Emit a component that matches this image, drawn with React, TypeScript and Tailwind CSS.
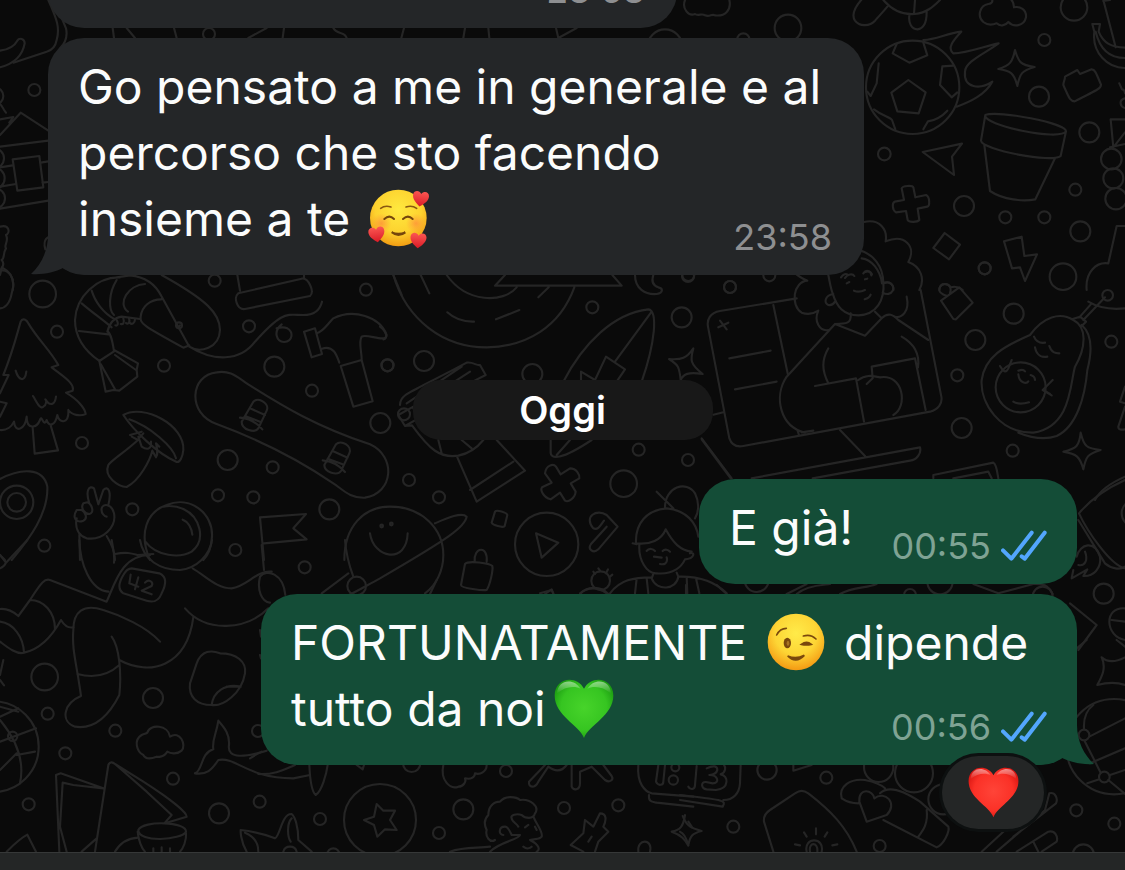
import type { ReactNode } from 'react';

type Tile = { x: number; y: number; dots: number[][]; lines: string[] };

/* Wallpaper doodles. Every tile is drawn at three times its final size. */
const tiles: Tile[] = [
  {
    x: 0,
    y: 0,
    dots: [[103, 270, 18], [627, 102, 18], [-15, 288, 25], [-18, 475, 30], [-18, 535, 32], [-15, 595, 30]],
    lines: [
      'M145 0C172 60 180 85 170 120C166 142 155 151 140 155L40 188',
      'M163 0L198 85C204 112 195 130 180 145',
      'M0 152C30 148 45 135 52 122C58 112 74 116 74 130C68 165 45 190 0 202',
      'M0 312C8 318 10 330 18 338',
      'M0 405L62 338L145 392M0 358L40 351L28 368',
      'M0 440L145 422M0 502L38 496M0 560L48 552M122 488L145 484M128 548L145 546M0 626L145 602',
      'M38 478L118 468L130 562L52 572Z',
      'M0 680C30 672 30 700 18 705C28 725 10 735 18 745C8 760 15 775 5 780C15 790 10 800 0 812C30 805 45 840 38 870',
      'M338 84L342 114M380 84L405 114M522 84L530 114M800 84L745 114M852 84L848 114M1000 84C1010 104 1035 94 1040 114M1212 84L1204 114',
      'M145 712C132 718 132 735 136 748',
    ],
  },
  {
    x: 450,
    y: 0,
    dots: [[1014, 84, 40], [645, 140, 52], [880, 118, 18]],
    lines: [
      'M705 0C695 25 715 50 735 42C745 50 755 38 765 46C780 52 785 40 795 46C825 50 845 30 838 0',
      'M45 84L40 114M115 84L118 114M318 84L325 114L380 84',
    ],
  },
  {
    x: 800,
    y: 0,
    dots: [
      [822, 22, 40], [733, 120, 18], [717, 290, 30], [868, 397, 30], [253, 462, 19], [826, 569, 18],
      [492, 618, 30], [616, 652, 18], [733, 652, 18], [841, 694, 30], [554, 805, 18], [789, 830, 40],
      [934, 477, 31], [940, 535, 30], [948, 596, 32], [338, 262, 140],
    ],
    lines: [
      'M188 -5C165 20 152 42 165 62C180 82 210 78 225 62C240 45 250 35 262 20M250 0C280 35 310 45 345 42C380 38 400 20 420 0M345 0L342 42M328 46C325 70 335 88 352 88C372 86 380 65 380 36',
      'M575 -5C580 5 575 12 565 12C540 16 530 48 550 66C565 78 580 74 590 70C600 80 615 78 625 66C640 82 672 80 678 52C680 28 660 18 642 22C642 5 636 0 630 -5',
      'M290 132L278 160L328 188L382 166L370 128M325 240L377 277L356 340L292 334L274 278Z',
      'M460 197L427 199L420 255L455 292L472 277M236 190L230 250L212 288L202 275M222 328C250 350 270 350 276 360L286 388M370 388L384 364C410 360 430 345 442 332',
      'M370 120C410 118 440 100 484 95C460 120 440 145 460 160C500 160 555 138 596 130C555 160 495 185 495 215C490 265 540 270 577 245C555 285 510 305 470 320',
      'M645 150C655 185 660 195 704 201C665 212 660 220 652 258C643 220 632 212 595 207C630 197 638 185 645 150Z',
      'M795 230L832 210L840 222L875 208C884 208 887 215 903 254C903 264 900 266 824 304C810 304 808 295 790 255C790 245 795 240 795 230Z',
      'M877 72L900 72L896 95C910 130 935 142 975 143M877 72L883 95C875 160 925 205 975 204M887 95C900 150 930 174 975 174M910 0L947 142M910 3L930 0',
      'M556 345C595 330 800 370 798 394C780 425 545 375 556 345ZM556 345L543 422C545 450 760 490 782 468L798 394M553 435L570 573C610 600 670 605 706 598L765 475',
      'M368 456L486 431L456 470L462 525Z',
      'M305 565C308 557 337 555 340 562L346 592L378 585C390 590 390 618 382 620L353 626L358 660C352 667 327 668 323 660L318 633L288 637C276 630 276 608 284 605L312 600Z',
      'M434 699L480 734L447 778L400 744Z',
      'M612 724L665 710L673 768L711 763L675 843L660 802L636 805Z',
      'M975 358L932 358L940 442L975 397M930 442L975 432',
      'M958 250L966 268C975 270 975 275 975 280M975 295C955 300 960 320 975 324',
      'M975 678L950 678L925 790C890 785 855 815 860 870',
      'M192 666C240 655 263 690 257 724C315 700 350 740 325 786C365 800 375 840 358 870',
      'M175 750C220 760 250 800 250 850C270 840 282 855 280 870M185 775C215 778 240 810 246 850M190 820C198 808 212 812 214 826M135 834C142 822 158 820 163 828',
      'M418 870C420 845 445 850 452 862C465 858 480 862 488 870',
    ],
  },
  {
    x: 0,
    y: 260,
    dots: [
      [128, 102, 40], [171, 215, 18], [644, 62, 18], [747, 199, 18], [1098, 89, 18], [492, 317, 18],
      [823, 320, 30], [936, 392, 18], [1163, 316, 18], [1141, 489, 30], [246, 549, 18], [683, 600, 30],
      [818, 622, 18], [654, 706, 18], [760, 712, 18], [397, 748, 18], [988, 748, 30], [706, 870, 18],
      [133, 857, 18], [50, 727, 50], [50, 727, 28], [1212, 463, 18], [1145, 798, 4], [1174, 792, 4],
      [537, 196, 9],
    ],
    lines: [
      'M0 45L6 22C40 40 45 70 35 100C30 130 15 145 0 145M1180 45L1205 105',
      'M360 52C290 50 228 110 225 180C225 240 265 280 298 303L342 274C335 225 325 215 322 215C330 185 345 172 365 170L420 177M245 130C280 160 310 180 335 202M275 92C285 125 310 160 345 178M350 60C325 100 325 150 342 165M350 52L390 46C430 50 465 70 484 108L565 255M237 213L325 223M384 155C350 130 385 75 435 72M484 118C450 118 425 140 422 170C420 190 425 195 550 263L568 256M540 196L535 202',
      'M350 180C358 195 350 198 346 196M370 175C375 190 368 194 362 192M387 175C392 190 382 193 378 189M405 178C405 190 395 195 390 189',
      'M485 45C620 120 660 160 660 210C658 265 600 280 568 260C640 305 720 305 765 245C850 150 860 165 910 165C945 165 960 150 966 125M845 193C818 215 830 245 852 246C880 243 880 215 862 205C850 200 840 202 830 205',
      'M298 303L317 395L340 390L358 392L412 350L410 330L414 310L342 270M302 312L345 388M345 285L408 330',
      'M712 45L720 92M715 100L905 56C925 52 945 95 930 108L735 147C710 150 700 110 715 100M912 45L912 56',
      'M945 205L912 215L935 292L966 282ZM950 220C970 215 980 195 1000 175C1060 145 1140 170 1160 225C1160 250 1100 220 1085 230C1075 245 1085 275 1085 298M966 266C1000 255 1010 285 1018 308M1022 318L1085 300L1118 424L1060 440Z',
      'M10 345C40 270 50 225 62 185C68 172 80 180 85 190C115 240 150 270 175 315L155 322C190 350 225 370 218 392L198 398C235 420 255 445 257 462C240 470 215 465 205 450C208 495 175 490 172 465C165 500 145 500 140 480C130 505 125 460 120 480C110 505 80 510 80 470C75 510 45 520 42 485C35 500 20 512 0 510M10 345L26 345L0 400M0 425L20 430L0 470M47 332C55 360 75 370 79 335M99 408C110 425 120 450 130 440C140 435 140 420 136 418C150 440 165 435 168 410M98 503L104 581L174 571L152 496',
      'M370 465C430 430 555 495 550 570C548 590 540 608 530 606C470 580 400 510 370 465ZM388 478C450 500 520 560 528 595M390 525L425 515M395 530L414 540C370 580 335 600 325 615C310 650 355 680 380 681C420 660 450 600 457 572M415 530L425 560C440 570 455 570 453 545M457 572L468 592C475 580 472 570 468 550L478 560M430 520L408 545',
      'M650 492C560 460 570 345 650 337C690 330 710 350 740 370C850 440 950 500 1110 553C1190 590 1180 700 1095 713C1050 715 1030 690 1000 670C890 595 780 540 650 492Z',
      'M725 485L760 425C775 410 810 430 800 452L775 505C765 520 725 510 725 485ZM720 473C745 475 770 488 787 508M735 468L780 485M750 445L795 465',
      'M973 615L1008 553C1023 538 1058 558 1048 580L1023 633C1013 648 973 638 973 615ZM968 601C993 603 1018 616 1035 636M983 596L1028 613M998 573L1043 593',
      'M0 657C60 625 130 620 142 680C145 760 90 835 35 900M0 885L15 900',
      'M230 775C225 800 232 825 260 835C310 842 350 800 342 760C335 730 308 730 305 745C302 760 315 770 320 770M268 730C255 690 268 675 282 685L295 733L310 690C325 675 335 695 325 735M230 750C215 775 230 790 250 782C265 775 255 755 245 750ZM250 730C240 745 255 762 268 762C285 758 275 732 262 727ZM238 825L240 900M320 828C340 860 345 880 345 900M345 882C380 875 395 880 412 885L460 882',
      'M450 900C415 820 440 755 500 735C570 705 640 760 636 830C634 870 620 890 610 900M436 845C470 890 540 895 575 875C620 840 600 770 550 747C530 738 510 736 490 740M548 779C565 785 575 805 577 824',
      'M792 900L780 772L918 762L880 805L920 838L792 850',
    ],
  },
  {
    x: 380,
    y: 260,
    dots: [
      [22, 316, 18], [132, 303, 30], [457, 342, 30], [637, 142, 18], [925, 45, 18],
      [1050, 81, 18], [905, 172, 30], [776, 569, 18], [924, 600, 18], [731, 671, 40], [87, 660, 18],
      [177, 712, 18], [500, 853, 95], [662, 962, 28],
    ],
    lines: [
      'M40 45C80 180 190 262 320 262C440 260 540 200 583 82M200 45C260 130 370 130 410 82M122 45L148 100M202 157C225 178 250 186 282 185M348 178L418 150M475 112L506 82M375 45L345 77L725 77L697 45',
      'M765 45C765 85 795 105 830 102C850 98 850 85 835 82C815 75 815 60 820 45',
      'M550 365C610 250 700 160 805 148C835 150 825 250 785 365M815 155L705 305M603 360L603 335L645 360M645 360L678 290L735 328L710 365M512 540L512 575C510 600 545 600 635 540M530 585L570 540',
      'M60 435C60 400 90 400 260 308C280 305 290 318 300 315L317 345L278 365M80 430L245 320M100 445L270 335M55 465L75 498L110 478M55 465L100 440M75 498L96 496C150 570 180 595 235 587C270 580 290 565 310 540M175 540L185 580M245 540L275 565M232 592L290 725L435 632L350 540M270 690L400 605',
      'M940 265C930 300 930 312 968 342C925 335 910 342 902 360C898 320 895 315 867 297C905 300 920 295 940 265Z',
      'M495 640C498 615 520 610 528 620L542 643L570 625C590 625 600 645 598 655L572 670L587 695C585 715 565 728 555 722L540 698L512 718C490 712 480 690 486 682L515 668Z',
      'M345 755C350 748 380 758 382 765L374 798C368 805 338 795 335 788Z',
      'M255 912L243 975C243 985 310 992 320 990C330 975 340 930 337 918C330 910 265 900 255 912ZM284 905C280 860 325 855 320 905',
      'M468 820L535 848L485 893Z',
      'M640 805C610 770 650 745 680 765L713 800L655 868C640 882 622 868 633 852L680 800M640 805C655 812 662 795 672 782',
      'M660 932L655 925M678 940L684 928M690 950L697 944M645 942L640 935',
      'M855 742C855 680 920 660 945 700C960 730 955 760 945 775M830 695L880 745M768 850C765 790 800 750 860 745C920 750 950 790 955 830M768 850C810 855 845 840 857 808C880 850 900 870 935 875M778 855C775 900 800 942 830 940C880 945 905 920 915 898C945 895 945 875 930 880M758 850L770 853M800 873C808 862 820 868 825 873M848 873C855 865 865 870 870 875M822 890L845 893M860 892C865 910 852 915 840 912M820 942L815 955C830 995 890 990 895 950L890 938M690 1000C720 960 760 952 815 952M895 950C960 948 1010 970 1040 1000M770 955L765 1000M800 955L805 1000M920 952L922 1000M948 955L958 1000M600 1000C625 980 650 980 680 1000M480 1000L515 990L520 1000',
      'M-107 900C-107 800 -50 740 30 740C130 740 190 810 190 885C190 930 170 975 135 1000M165 790C200 775 245 755 260 770C255 800 215 830 0 955C-55 985 -80 1000 -100 1008M-30 820C-20 895 80 915 83 820',
      'M0 200C20 215 25 235 10 238',
      'M965 538L1052 655',
    ],
  },
  {
    x: 680,
    y: 240,
    dots: [
      [24, 108, 18], [150, 141, 18], [268, 106, 18], [914, 85, 18], [1001, 221, 30], [886, 300, 30],
      [1294, 305, 18], [832, 406, 18], [845, 564, 30], [998, 632, 18], [1022, 442, 75], [1283, 166, 16],
    ],
    lines: [
      'M350 175L120 213C90 218 80 240 84 260L148 595C155 615 170 622 190 618L750 515C775 508 788 490 784 470L722 150M280 195L324 405M148 355L272 332M165 448L290 425M120 242L140 268M115 262L145 248',
      'M350 104C365 115 370 118 382 122C340 125 330 195 365 218C385 225 400 222 415 212C400 245 420 275 445 270M680 170C690 215 665 235 645 230',
      'M445 105C450 130 452 145 458 160M458 160C470 200 490 225 535 226C590 224 615 180 610 125M460 162C435 165 430 190 445 195C455 197 462 190 465 185M612 130C630 120 645 140 638 152C632 163 620 165 608 158M500 130L508 126M555 118L562 116M522 152C535 158 545 155 555 150M554 178C565 175 570 170 572 164M483 112C490 102 498 100 503 104M556 96C565 92 572 96 576 103',
      'M512 220C515 250 500 252 465 252L555 287L605 235L585 215M605 235C625 215 640 225 655 240L745 300M465 252L320 410C280 470 300 560 375 578M445 325C425 360 425 390 445 430M405 438L528 415L552 545M665 290C700 310 720 340 714 382M575 380L705 355L737 510M575 380L578 415L560 432M535 420C560 400 585 410 600 412C670 400 685 500 640 525M352 570L357 585M365 577L400 572',
      'M100 524L130 517M480 570L555 648M65 595L155 715M215 715L720 622C725 640 710 660 690 662L398 715M760 715L760 705L940 668C950 672 952 700 955 715M820 715L925 695L935 715',
      'M802 168C790 165 775 160 778 145C785 125 812 130 812 150L810 160M783 182L838 142L878 188L828 238L820 237Z',
      'M1050 285C1090 230 1140 215 1180 240C1220 260 1220 320 1185 380C1170 430 1175 560 1060 578C960 580 900 490 905 420C915 350 970 320 1050 285ZM1205 255C1240 285 1235 340 1222 390C1215 470 1190 560 1130 588C1090 602 1050 592 1015 578M1178 237L1200 230L1218 245L1205 258M1198 232L1235 190M1210 240L1275 172M1335 205C1290 210 1250 200 1225 185',
      'M1062 290C1068 305 1080 310 1095 308M1065 322C1070 350 1090 352 1102 350M1108 318C1115 338 1125 340 1138 340M1015 392C1025 388 1032 390 1035 394M1015 403C1018 430 1040 432 1045 424M1052 405C1062 408 1065 412 1065 420M1000 485C1015 495 1030 492 1047 487M960 378C970 395 978 400 985 385L995 360M1118 420L1088 450L1115 466M1090 450L1110 462',
      'M1202 578C1212 620 1220 625 1262 630C1222 642 1218 650 1210 688C1200 650 1190 642 1150 635C1190 625 1198 618 1202 578Z',
      'M1335 440L1320 485L1335 490M1335 500L1315 560C1315 570 1325 570 1335 568',
      'M1335 710C1290 730 1260 750 1245 780',
    ],
  },
  {
    x: 0,
    y: 540,
    dots: [
      [914, 82, 18], [134, 411, 40], [459, 474, 30], [143, 521, 18], [346, 572, 18], [196, 640, 18],
      [86, 793, 18], [519, 716, 18], [657, 820, 30], [779, 785, 18], [960, 837, 18], [774, 573, 18],
      [1000, 943, 18], [1070, 138, 28], [38, 589, 14], [1140, 840, 108], [-20, 620, 136],
    ],
    lines: [
      'M0 45L18 68L82 0M0 85C8 82 14 78 18 68',
      'M238 0C240 70 270 150 325 155M320 185L150 120C135 115 125 125 90 180L55 228C40 215 20 205 0 207M90 180C130 180 165 215 165 268M0 245C40 250 70 290 72 338C50 345 20 320 0 305M72 338C110 330 150 300 183 240C195 260 205 265 220 262M320 185C345 130 365 45 450 45M335 0C340 30 345 45 342 68M578 85C620 110 650 145 695 145C740 140 770 90 815 95M555 205C620 280 740 270 805 205',
      'M780 110C770 150 785 185 810 188M780 110C800 85 850 100 856 165M480 305C440 260 360 225 310 210C250 190 220 215 220 270C215 330 230 370 243 468C190 490 180 545 225 560C290 570 330 520 358 465C365 400 358 320 335 290M232 402C280 415 325 405 358 375M358 360C450 410 560 380 580 232',
      'M395 85L478 100C500 110 500 130 485 160C475 185 460 188 440 182L370 160C355 150 355 130 370 105C378 90 385 85 395 85Z',
      'M392 104L388 130L415 140M415 112L405 148M435 128C445 115 462 125 455 138L425 152L455 163',
      'M0 405L10 360M0 420L12 436',
      'M570 430L590 370C605 330 635 330 660 340C710 340 740 365 735 400C725 460 670 500 635 495C590 495 565 470 570 430ZM635 495C640 455 675 430 722 440C705 440 690 440 680 440',
      'M0 530L55 505M0 605L108 565M50 640L0 690M0 540C50 600 75 660 60 730M50 645L105 635M0 500L55 515',
      'M425 585C435 580 437 582 442 578C450 550 505 555 510 590C540 570 560 615 545 632C530 645 510 640 502 635C490 655 470 650 470 650C445 660 435 655 430 645C410 635 400 600 425 585Z',
      'M655 542C670 560 690 580 687 615C680 660 740 650 800 632M655 542C650 580 635 600 640 628C600 640 610 690 585 700C620 705 635 690 655 660C710 650 740 715 880 715L930 705M775 702C820 705 850 690 885 675M928 675C930 720 935 755 947 765C965 755 980 700 983 675M1070 675L1088 688L1092 675',
      'M178 935L168 705L182 700L310 745L220 735L188 728L180 860L200 935M285 935L325 675C330 662 340 668 345 672L430 725C500 770 560 815 560 830L500 848M345 672L440 755L515 825L495 848M245 935L290 895M20 935C50 905 70 890 82 884L108 935',
      'M415 870C430 840 560 845 558 875C545 900 415 910 415 870ZM413 875C415 900 425 925 435 935M558 880C560 900 550 925 540 935M413 893C380 895 360 910 345 935M460 925L460 935M485 922L485 935M510 925L510 935',
      'M740 935C720 900 722 870 722 870C765 875 800 885 825 895C840 890 845 820 875 822C885 830 895 860 895 900L935 935M735 878C765 890 775 910 775 935M875 835C860 850 862 890 872 905M850 935C855 915 885 915 890 935',
      'M1130 792L1150 812L1185 812L1170 840L1190 870L1155 868L1132 890L1122 855L1092 840L1122 830Z',
      'M965 160L1045 100M1035 0C1038 40 1045 70 1060 110M780 270L783 290M780 345L783 355M792 90L785 15M420 0C430 60 480 90 540 90C590 85 630 45 636 0',
    ],
  },
  {
    x: 250,
    y: 580,
    dots: [
      [640, 688, 30], [567, 759, 18], [768, 573, 18], [942, 684, 18], [1105, 676, 18], [485, 550, 26], [1270, 600, 14], [1276, 562, 12],
    ],
    lines: [
      'M580 555C570 600 600 630 625 620C640 620 650 605 645 595C665 600 675 590 675 580C690 585 710 575 710 555',
      'M885 555L837 605C835 625 855 625 865 605L895 560C915 575 935 575 950 555M965 555L965 620C970 632 990 632 990 610L990 575L1025 560L1065 600C1080 610 1092 598 1085 588L1060 555',
      'M1165 555C1160 610 1185 635 1205 640L1330 650M1197 645C1195 665 1205 665 1220 668L1330 680M1225 555L1218 605C1225 620 1240 615 1240 605L1245 555',
      'M735 780C720 790 705 770 710 750C700 730 705 715 715 705C715 680 730 665 750 665C765 645 800 650 810 660C840 655 870 680 855 700C850 720 825 715 815 705C800 700 780 705 785 715C785 725 800 730 805 740M760 765C745 765 745 740 765 740C775 740 780 755 785 765L810 765C805 780 750 785 720 815M850 710C860 735 880 755 875 770C868 780 855 775 840 780C870 795 870 810 860 815M825 742L835 735M855 740L860 750M820 800C830 808 840 805 845 800',
      'M600 815C640 800 680 805 720 800M1005 720L1030 740L1050 700C1070 700 1070 720 1060 740L1075 755L1045 785L1035 815M1005 720L1000 760L962 795L1000 815M1025 770L1015 785',
      'M1165 815C1160 775 1210 775 1200 815M1305 705C1300 740 1290 750 1265 755C1295 765 1305 780 1315 797M1315 725L1325 740',
      'M0 535C15 525 25 520 35 515M540 42L560 0M885 42L905 28L910 42M990 42C1010 20 1050 15 1075 42',
    ],
  },
  {
    x: 680,
    y: 470,
    dots: [[1271, 371, 30], [780, 335, 38], [230, 330, 36], [690, 375, 18], [1088, 380, 30], [1365, 130, 40]],
    lines: [
      'M1335 30C1280 55 1230 90 1197 130C1220 180 1290 285 1335 295M1195 150L1275 280C1295 297 1320 300 1335 290',
      'M1190 260C1200 220 1245 210 1260 260C1265 295 1240 320 1210 318L1222 298L1175 325L1180 300M1195 285C1215 290 1225 270 1215 245',
      'M1170 400L1250 465L1195 540M1335 415C1270 410 1275 500 1335 510M1295 450L1335 455',
      'M110 345L140 372M18 345L18 372M320 372L380 342M350 372C380 345 430 345 450 342M480 372C520 350 560 355 590 342M880 342L955 370L1060 342C1100 340 1110 355 1118 372',
    ],
  },
  {
    x: 680,
    y: 640,
    dots: [
      [261, 390, 29], [439, 413, 18], [160, 560, 18], [599, 618, 18], [596, 382, 44], [702, 400, 57],
      [1189, 511, 18], [1303, 551, 18], [1210, 645, 32], [1212, 285, 16], [1273, 411, 16], [1302, 320, 143], [790, 478, 45],
    ],
    lines: [
      'M1265 52C1285 70 1310 65 1335 52M1265 52C1280 85 1265 110 1252 135C1290 125 1315 128 1335 135',
      'M1212 265C1210 230 1220 210 1240 195M1228 290L1335 235M1230 370L1335 325M1215 305L1262 398M1285 420L1335 462M1222 430L1258 418M1290 405L1335 390',
      'M0 480L128 500C140 480 130 480 0 465M25 440C30 450 45 450 45 435L50 378M80 385C100 375 112 378 112 390C110 400 98 404 88 405C115 405 120 430 98 430L78 426C62 424 62 446 80 448L108 450C150 446 145 405 122 403C140 395 136 380 132 375M182 375L180 430C178 460 160 480 130 480',
      'M280 635L252 545C250 530 255 520 270 510L345 460C360 450 370 450 385 460C450 510 500 560 530 635M380 635C370 590 435 590 425 635M390 635C385 605 415 605 412 635M408 565L408 583M372 577L380 590M442 577L434 590M345 613L360 616M472 613L457 616',
      'M560 545L538 485C535 440 580 450 583 475C615 450 655 490 620 525ZM610 540L770 622C790 615 810 575 805 560L720 485C660 445 620 440 600 460M485 475C475 440 510 415 555 420C580 425 600 430 615 445M485 475C500 485 520 490 535 490M740 510C745 550 730 570 715 590M340 375L340 392L395 375',
      'M905 635L970 575M950 635L1095 510L1108 460C1125 455 1135 475 1128 490L1000 590M1010 635L1105 575C1125 570 1135 590 1130 605L1085 635M1060 605L1075 635',
      'M8 528C20 560 35 565 65 573C35 580 30 590 25 615C18 590 8 578 0 575',
      'M1190 25L1220 0M1335 20L1310 0',
    ],
  },
];

function Wallpaper() {
  return (
    <svg
      className="absolute inset-0 h-full w-full"
      viewBox="0 0 1125 870"
      preserveAspectRatio="xMidYMid slice"
      fill="none"
      stroke="#252525"
      strokeWidth="6.4"
      strokeLinecap="round"
      strokeLinejoin="round"
      aria-hidden="true"
    >
      {tiles.map((t) => (
        <g key={`${t.x}-${t.y}`} transform={`translate(${t.x} ${t.y}) scale(0.33333)`}>
          {t.dots.map(([x, y, r]) => (
            <circle key={`${x},${y}`} cx={x} cy={y} r={r} />
          ))}
          {t.lines.map((d) => (
            <path key={d} d={d} />
          ))}
        </g>
      ))}
    </svg>
  );
}

function SmallHeart({ x, y, turn = 0 }: { x: number; y: number; turn?: number }) {
  return (
    <path
      transform={`translate(${x} ${y}) rotate(${turn})`}
      d="M0 25C-13 15-25 4-24-9C-23-22-7-25 0-13C7-25 23-22 24-9C25 4 13 15 0 25Z"
      fill="url(#hug-heart)"
    />
  );
}

function HeartsFace() {
  return (
    <svg className="-my-2 ml-1 inline-block size-[62px] align-[-6px]" viewBox="22 27 186 180" role="img" aria-label="🥰">
      <defs>
        <radialGradient id="hug-face" cx="0.5" cy="0.35" r="0.68">
          <stop offset="0" stopColor="#ffe93f" />
          <stop offset="0.6" stopColor="#fdd22f" />
          <stop offset="1" stopColor="#f0960f" />
        </radialGradient>
        <radialGradient id="hug-cheek">
          <stop offset="0" stopColor="#ff7a3d" stopOpacity="0.6" />
          <stop offset="1" stopColor="#ff8a3d" stopOpacity="0" />
        </radialGradient>
        <linearGradient id="hug-heart" x1="0" y1="0" x2="0" y2="1">
          <stop offset="0" stopColor="#fb5652" />
          <stop offset="1" stopColor="#d91a26" />
        </linearGradient>
      </defs>
      <circle cx="113" cy="114" r="85" fill="url(#hug-face)" />
      <circle cx="62" cy="130" r="30" fill="url(#hug-cheek)" />
      <circle cx="166" cy="130" r="30" fill="url(#hug-cheek)" />
      <g fill="none" stroke="#75460c" strokeWidth="6" strokeLinecap="round">
        <path d="M60 85Q73 75 91 81M136 81Q154 75 168 85" stroke="#8a5810" strokeWidth="5" />
        <path d="M71 117Q86 103 100 117M127 117Q142 103 156 117" />
        <path d="M93 157Q113 173 134 157Q113 166 93 157Z" fill="#75460c" />
      </g>
      <SmallHeart x={180} y={55} turn={8} />
      <SmallHeart x={48} y={162} turn={-8} />
      <SmallHeart x={173} y={180} turn={4} />
    </svg>
  );
}

function WinkFace() {
  return (
    <svg className="-my-2 mx-[6px] inline-block size-[58px] align-[-3px]" viewBox="658 40 172 174" role="img" aria-label="😉">
      <defs>
        <radialGradient id="wink-face" cx="0.5" cy="0.35" r="0.68">
          <stop offset="0" stopColor="#ffeb49" />
          <stop offset="0.55" stopColor="#fdd535" />
          <stop offset="1" stopColor="#f3930f" />
        </radialGradient>
      </defs>
      <circle cx="744" cy="127" r="85" fill="url(#wink-face)" />
      <ellipse cx="718" cy="130" rx="11" ry="16" fill="#7a480d" />
      <ellipse cx="720" cy="131" rx="4" ry="8" fill="#a97524" />
      <g fill="none" stroke="#7a480d" strokeWidth="5" strokeLinecap="round">
        <path d="M686 106Q696 86 715 86M766 109Q788 102 804 118" />
        <path d="M760 134Q776 122 790 134Q775 137 760 134Z" fill="#7a480d" />
        <path d="M719 169Q743 194 769 167Q744 180 719 169Z" fill="#7a480d" />
      </g>
    </svg>
  );
}

type HeartProps = { id: string; label: string; className: string; colors: [string, string, string] };

function Heart({ id, label, className, colors }: HeartProps) {
  return (
    <svg className={className} viewBox="19 238 178 176" role="img" aria-label={label}>
      <defs>
        <radialGradient id={id} cx="0.5" cy="0.48" r="0.6">
          <stop offset="0" stopColor={colors[0]} />
          <stop offset="0.65" stopColor={colors[1]} />
          <stop offset="1" stopColor={colors[2]} />
        </radialGradient>
        <linearGradient id={`${id}-shine`} x1="0" y1="0" x2="0" y2="1">
          <stop offset="0" stopColor="#fff" stopOpacity="0.5" />
          <stop offset="1" stopColor="#fff" stopOpacity="0" />
        </linearGradient>
      </defs>
      <path
        d="M108 412C92 372 21 346 21 286C21 232 87 224 108 266C129 224 195 232 195 286C195 346 124 372 108 412Z"
        fill={`url(#${id})`}
      />
      <path d="M28 280C30 236 80 234 98 266C80 256 50 260 28 280Z" fill={`url(#${id}-shine)`} />
      <path d="M188 280C186 236 136 234 118 266C136 256 166 260 188 280Z" fill={`url(#${id}-shine)`} />
    </svg>
  );
}

function Ticks() {
  return (
    <svg className="h-[31px] w-[46px]" viewBox="965 178 138 93" fill="none" stroke="#53a6fd" strokeWidth="12" strokeLinecap="round" strokeLinejoin="round" role="img" aria-label="Letto">
      <path d="M971 239L996 264L1057 186M1027 257L1036 264L1096 186" />
    </svg>
  );
}

function Tail({ side }: { side: 'in' | 'out' }) {
  return (
    <svg
      className={
        side === 'in'
          ? 'absolute bottom-0 -left-[17px] h-10 w-[62px] text-[#242628]'
          : 'absolute -right-[17px] bottom-0 h-10 w-[62px] -scale-x-100 text-[#144d37]'
      }
      viewBox="0 0 62 40"
      fill="currentColor"
      aria-hidden="true"
    >
      <path d="M17 0C17 16 10 30 0 39C12 40 24 37 32 33C40 38 50 40 62 40V0Z" />
    </svg>
  );
}

type BubbleProps = { side: 'in' | 'out'; time: string; size: string; tail?: boolean; children?: ReactNode; reaction?: ReactNode };

function Bubble({ side, time, size, tail, children, reaction }: BubbleProps) {
  const tone = side === 'in' ? 'self-start bg-[#242628] pr-8' : 'self-end bg-[#144d37] pr-[30px]';
  return (
    <article className={`relative grid max-w-full shrink-0 rounded-[36px] pt-4 pb-[23px] pl-[30px] ${tone} ${size}`}>
      {tail && <Tail side={side} />}
      <p className="relative col-start-1 row-start-1 min-h-[66px] text-[48px] leading-[66px] text-[#fbfcfc]">{children}</p>
      <div className="relative col-start-1 row-start-1 flex items-end gap-[10px] self-end justify-self-end">
        <time className={side === 'in' ? 'text-[36px] leading-[30px] text-[#8e8f91]' : 'text-[36px] leading-[30px] text-[#7fa394]'}>{time}</time>
        {side === 'out' && <Ticks />}
      </div>
      {reaction}
    </article>
  );
}

export default function App() {
  return (
    <div className="relative flex h-screen flex-col overflow-hidden bg-[#0a0a0a] font-['Inter','Liberation_Sans',sans-serif]">
      <Wallpaper />
      <main className="relative flex min-h-0 flex-1 flex-col justify-end gap-[10px] px-12 pb-[87px]">
        <Bubble side="in" time="23:58" size="w-[629px]" />
        <Bubble side="in" time="23:58" size="w-[816px]" tail>
          Go pensato a me in generale e al
          <br />
          percorso che sto facendo
          <br />
          insieme a te <HeartsFace />
        </Bubble>
        <h2 className="mt-[95px] mb-[29px] w-[300px] shrink-0 self-center rounded-[28px] bg-[#181818] text-center text-[38px] leading-[60px] font-semibold text-white">
          Oggi
        </h2>
        <Bubble side="out" time="00:55" size="w-[378px]">
          E già!
        </Bubble>
        <Bubble
          side="out"
          time="00:56"
          size="w-[816px]"
          tail
          reaction={
            <button
              type="button"
              className="absolute right-[33px] -bottom-16 flex h-[73px] w-[102px] items-center justify-center rounded-full bg-[#242626] ring-3 ring-[#0d1010]"
            >
              <Heart id="red-heart" label="❤️" className="size-[51px]" colors={['#ff4438', '#fb3127', '#d5120f']} />
            </button>
          }
        >
          FORTUNATAMENTE <WinkFace /> dipende
          <br />
          tutto da noi
          <Heart id="green-heart" label="💚" className="-my-2 ml-2 inline-block size-[60px] align-[-5px]" colors={['#47d42a', '#36c521', '#18960f']} />
        </Bubble>
      </main>
      <footer className="relative h-[18px] shrink-0 border-t border-[#363838] bg-[#242626]" />
    </div>
  );
}
